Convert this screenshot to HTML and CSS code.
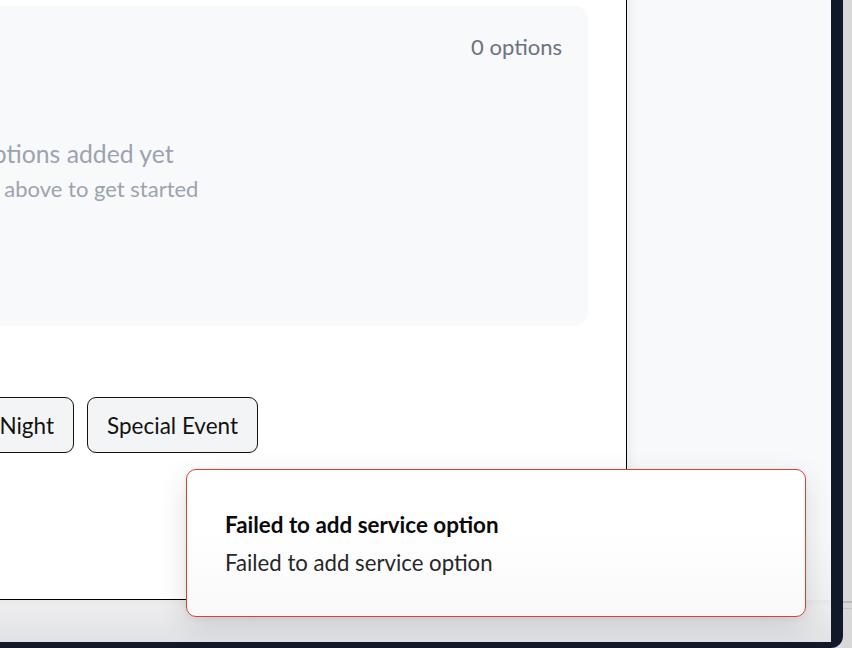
FILE: index.html
```html
<!DOCTYPE html>
<html lang="en">
<head>
<meta charset="utf-8">
<title>Service Options</title>
<link rel="stylesheet" href="styles.css">
</head>
<body>
<div class="screen">
  <div class="frame">
    <div class="workspace">
      <main class="main">
        <div class="main-inner">
          <section class="card">
            <header class="card-head">
              <h2 class="card-title">Service Options</h2>
              <span class="count">0 options</span>
            </header>
            <div class="empty">
              <p class="empty-title">No service options added yet</p>
              <p class="empty-sub">Select a template above to get started</p>
            </div>
          </section>
          <div class="templates">
            <button class="tpl" type="button">Breakfast</button>
            <button class="tpl" type="button">Lunch</button>
            <button class="tpl" type="button">Dinner</button>
            <button class="tpl" type="button">Late Night</button>
            <button class="tpl" type="button">Special Event</button>
          </div>
        </div>
      </main>
      <aside class="side"></aside>
    </div>
    <div class="bottom"></div>
  </div>
  <div class="desk">
    <div class="desk-line"></div>
    <div class="desk-line thin"></div>
  </div>
  <div class="toast" role="alert">
    <div class="toast-title">Failed to add service option</div>
    <div class="toast-desc">Failed to add service option</div>
  </div>
</div>
</body>
</html>
```

FILE: styles.css
```css
* { box-sizing: border-box; }

html, body {
  margin: 0;
  padding: 0;
  width: 852px;
  height: 648px;
  overflow: hidden;
  font-family: Lato, "Noto Sans", "Liberation Sans", sans-serif;
  background: #dcdcdd;
}

.screen {
  position: relative;
  display: flex;
  width: 852px;
  height: 648px;
}

.frame {
  width: 843px;
  height: 648px;
  flex: none;
  display: flex;
  flex-direction: column;
  border-right: 12px solid #111827;
  border-bottom: 6px solid #111827;
  border-bottom-right-radius: 12px;
  overflow: hidden;
  background: #f8f9fb;
}

.workspace {
  display: flex;
  height: 600px;
  flex: none;
}

.main {
  width: 627px;
  flex: none;
  height: 600px;
  background: #ffffff;
  border-right: 1px solid #000000;
  border-bottom: 1px solid #000000;
  overflow: hidden;
}

.main-inner {
  margin-left: -557px;
  padding: 6px 38px 0 0;
}

.card {
  height: 320px;
  background: #f8f9fb;
  border-radius: 14px;
  padding: 27px 26px 0 26px;
}

.card-head {
  display: flex;
  justify-content: space-between;
  align-items: center;
  height: 28px;
}

.card-title {
  margin: 0;
  font-size: 24px;
  font-weight: 700;
  color: #111827;
}

.count {
  font-size: 22px;
  line-height: 28px;
  color: #6b7280;
}

.empty {
  padding-top: 77px;
  text-align: center;
}

.empty-title {
  margin: 0;
  font-size: 24.75px;
  line-height: 32px;
  color: #9ca3af;
}

.empty-sub {
  margin: 4px 0 0;
  font-size: 22px;
  line-height: 30px;
  color: #9ca3af;
}

.templates {
  display: flex;
  justify-content: flex-end;
  gap: 13px;
  margin-top: 71px;
  margin-right: 330px;
}

.tpl {
  height: 56px;
  padding: 0 19px;
  border: 1px solid #111111;
  border-radius: 9px;
  background: #f3f4f6;
  font-family: inherit;
  font-size: 22.5px;
  color: #111111;
  white-space: nowrap;
}

.side {
  flex: 1;
  height: 600px;
  background: linear-gradient(to bottom, #f8f9fb 0%, #f8f9fb 88%, #eff0f2 100%);
  box-shadow: inset 10px 0 12px -8px rgba(0, 0, 0, 0.07);
}

.bottom {
  flex: 1;
  background: linear-gradient(to bottom, #efeff0, #e1e2e4);
  box-shadow: inset 0 6px 8px -6px rgba(0, 0, 0, 0.06);
}

.desk {
  flex: 1;
  display: flex;
  flex-direction: column;
  padding-top: 601px;
  background: #d8d8d9;
}

.desk-line {
  height: 2px;
  background: #b9b9bb;
}

.desk-line.thin {
  height: 1px;
  margin-top: 5px;
  background: #c4c4c6;
}

.toast {
  position: absolute;
  left: 186px;
  top: 469px;
  width: 620px;
  height: 148px;
  padding: 40px 38px;
  background: linear-gradient(to bottom, #ffffff 40%, #f9f9f9 100%);
  border: 1px solid #d14535;
  border-radius: 10px;
  box-shadow: 0 10px 30px rgba(0, 0, 0, 0.12), 0 2px 6px rgba(0, 0, 0, 0.05);
}

.toast-title {
  font-size: 22.4px;
  line-height: 30px;
  font-weight: 700;
  color: #0a0a0a;
}

.toast-desc {
  margin-top: 8px;
  font-size: 22.2px;
  line-height: 30px;
  color: #27272a;
}
```
